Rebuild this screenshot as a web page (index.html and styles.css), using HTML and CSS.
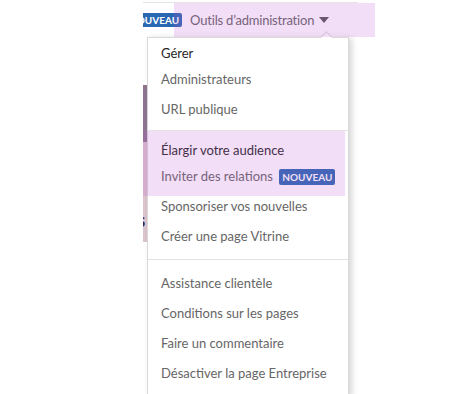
FILE: index.html
```html
<!DOCTYPE html>
<html lang="fr">

<head>
    <meta charset="UTF-8" />
    <meta name="viewport" content="width=device-width, initial-scale=1.0" />
    <title>Outils d'administration</title>
    <link rel="stylesheet" href="styles.css">
</head>

<body>

    <div class="page">
        <div class="topbar">
            <span class="badge badge_top">NOUVEAU</span>
            <span class="admin_label">Outils d’administration</span>
            <span class="caret"></span>
        </div>

        <div class="dropdown">
            <div class="backdrop">
                <div class="backdrop_dark"></div>
                <div class="backdrop_pink"><span class="backdrop_letter">S</span></div>
            </div>

            <div class="menu">
                <div class="section first">
                    <div class="heading">Gérer</div>
                    <div class="item">Administrateurs</div>
                    <div class="item">URL publique</div>
                </div>
                <div class="section">
                    <div class="heading">Élargir votre audience</div>
                    <div class="item">Inviter des relations <span class="badge">NOUVEAU</span></div>
                    <div class="item">Sponsoriser vos nouvelles</div>
                    <div class="item">Créer une page Vitrine</div>
                </div>
                <div class="section">
                    <div class="item">Assistance clientèle</div>
                    <div class="item">Conditions sur les pages</div>
                    <div class="item">Faire un commentaire</div>
                    <div class="item">Désactiver la page Entreprise</div>
                </div>
            </div>
        </div>
    </div>

    <!-- highlight marks over the screenshot -->
    <div class="highlight highlight_top"></div>
    <div class="highlight highlight_row"></div>

</body>

</html>
```

FILE: styles.css
```css
* {
    box-sizing: border-box;
    font-family: 'Lato', sans-serif;
}

body {
    margin: 0;
    padding: 0;
    background-color: #fff;
    width: 470px;
    height: 394px;
    overflow: hidden;
    position: relative;
}

.page {
    margin-left: 143px;
    width: 232px;
}

/* top bar */

.topbar {
    margin-top: 2px;
    width: 215px;
    height: 35px;
    border-top: 1px solid #e4e4e4;
    display: flex;
    align-items: center;
    overflow: hidden;
}

.badge {
    display: inline-block;
    background-color: #2867b2;
    color: #fff;
    font-size: 10px;
    font-weight: 700;
    line-height: 16px;
    height: 16px;
    padding: 0 3px;
    border-radius: 2px;
    margin-left: 3px;
}

.badge_top {
    flex-shrink: 0;
    margin-left: -17px;
    height: 14px;
    line-height: 14px;
}

.admin_label {
    margin-left: 8px;
    font-size: 13px;
    letter-spacing: -0.2px;
    color: #666;
    white-space: nowrap;
}

.caret {
    flex-shrink: 0;
    margin-left: 5px;
    width: 0;
    height: 0;
    border-left: 5px solid transparent;
    border-right: 5px solid transparent;
    border-top: 6px solid #555;
}

/* dropdown */

.dropdown {
    display: flex;
}

.backdrop {
    width: 4px;
    padding-top: 48px;
    display: flex;
    flex-direction: column;
}

.backdrop_dark {
    height: 57px;
    background-color: #8e7590;
}

.backdrop_pink {
    height: 100px;
    background-color: #dcc3cd;
    overflow: hidden;
    padding-top: 74px;
}

.backdrop_letter {
    display: block;
    margin-left: -5px;
    font-size: 13px;
    font-weight: 700;
    line-height: 13px;
    color: #2e1f4f;
}

.menu {
    width: 202px;
    height: 360px;
    background-color: #fff;
    border: 1px solid #d9d9d9;
    border-bottom: 0;
    box-shadow: 3px 1px 6px rgba(0, 0, 0, 0.16);
    position: relative;
}

.menu::before {
    content: "";
    position: absolute;
    top: -5px;
    left: 174px;
    width: 8px;
    height: 8px;
    background-color: #fff;
    border-top: 1px solid #d9d9d9;
    border-left: 1px solid #d9d9d9;
    transform: rotate(45deg);
}

.section {
    padding: 8px 0 8px 13px;
    border-top: 1px solid #e3e3e3;
}

.section.first {
    padding-top: 4px;
    padding-bottom: 6px;
    border-top: 0;
}

.heading {
    font-size: 13px;
    line-height: 22px;
    color: #262626;
}

.item {
    font-size: 13px;
    line-height: 30px;
    height: 30px;
    color: #666;
    white-space: nowrap;
}

/* highlight marks */

.highlight {
    position: absolute;
    background-color: rgba(190, 90, 210, 0.2);
    pointer-events: none;
}

.highlight_top {
    left: 174px;
    top: 3px;
    width: 201px;
    height: 34px;
}

.highlight_row {
    left: 143px;
    top: 131px;
    width: 202px;
    height: 65px;
}
```
